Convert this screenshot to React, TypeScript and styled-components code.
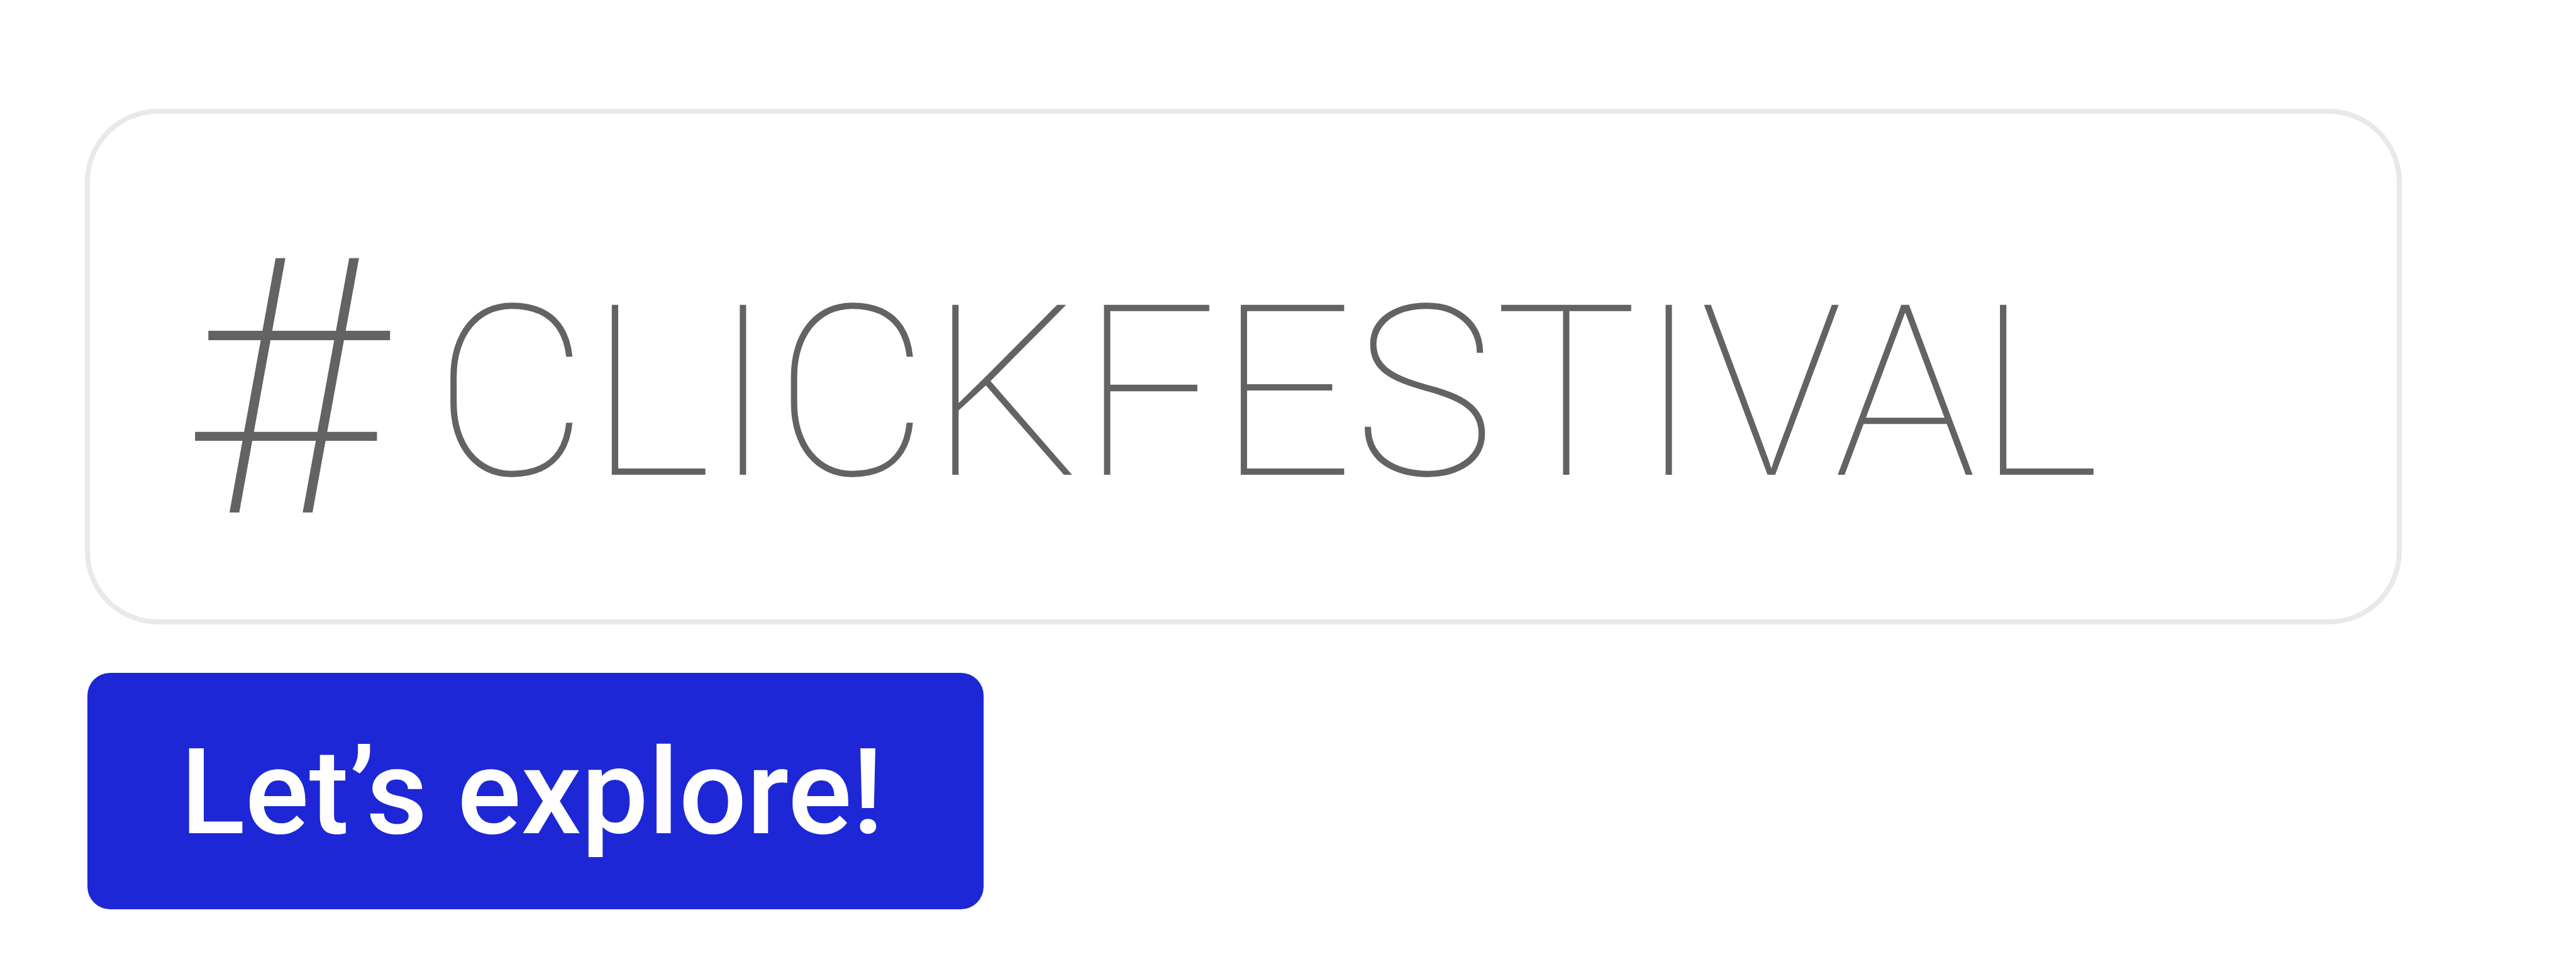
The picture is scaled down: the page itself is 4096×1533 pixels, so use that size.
import React from "react";
import styled, { createGlobalStyle } from "styled-components";

const GlobalStyle = createGlobalStyle`
  *, *::before, *::after { box-sizing: border-box; }
  body { margin: 0; background: #fff; font-family: Roboto, "Liberation Sans", sans-serif; }
`;

const Page = styled.main`
  display: flex;
  flex-direction: column;
  align-items: flex-start;
  gap: 77px;
  padding: 173px 281px 86px 139px;
`;

const TagField = styled.div`
  display: flex;
  align-items: flex-end;
  align-self: stretch;
  gap: 82px;
  margin: 0 -4px;
  padding: 120px 153px 44px;
  border: 8px solid #e9e9e9;
  border-radius: 116px;
  color: #636363;
  font-weight: 100;
`;

const HashSign = styled.label`
  font-size: 569px;
  line-height: 640px;
`;

const TagInput = styled.input`
  flex: 1;
  min-width: 0;
  height: 632px;
  padding: 0;
  border: 0;
  outline: 0;
  background: transparent;
  color: inherit;
  font-family: inherit;
  font-size: 380px;
  font-weight: inherit;
  line-height: 632px;
`;

const ExploreButton = styled.button`
  padding: 70px 159px 66px 148px;
  border: 0;
  border-radius: 36px;
  background: #1d27d6;
  color: #fff;
  font-family: inherit;
  font-size: 190px;
  font-weight: 500;
  line-height: 240px;
  white-space: nowrap;
`;

export default function App() {
  return (
    <>
      <GlobalStyle />
      <Page>
        <TagField>
          <HashSign htmlFor="tag">#</HashSign>
          <TagInput id="tag" type="text" defaultValue="CLICKFESTIVAL" />
        </TagField>
        <ExploreButton type="button">Let’s explore!</ExploreButton>
      </Page>
    </>
  );
}
